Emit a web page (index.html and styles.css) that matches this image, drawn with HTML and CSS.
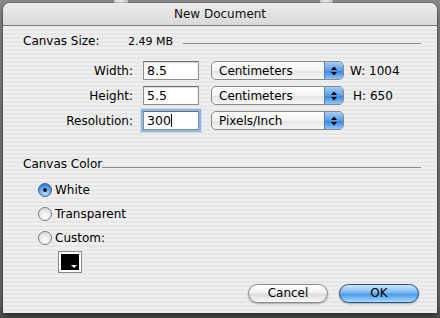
FILE: index.html
```html
<!DOCTYPE html>
<html>
<head>
<meta charset="utf-8">
<link rel="stylesheet" href="styles.css">
</head>
<body>
<div class="window">
  <div class="titlebar">New Document</div>
  <div class="content">
    <div class="sizerow">
      <span class="sizelbl">Canvas Size:</span>
      <span class="mb">2.49 MB</span>
      <span class="rule"></span>
    </div>
    <div class="form">
      <span class="flabel">Width:</span>
      <div class="field">8.5</div>
      <div class="popup"><span class="ptext">Centimeters</span><span class="cap"><svg width="8" height="12" viewBox="0 0 8 12"><path d="M1 5 L4 1.5 L7 5 Z M1 7 L4 10.5 L7 7 Z" fill="#000"/></svg></span></div>
      <span class="dim">W: 1004</span>

      <span class="flabel">Height:</span>
      <div class="field">5.5</div>
      <div class="popup"><span class="ptext">Centimeters</span><span class="cap"><svg width="8" height="12" viewBox="0 0 8 12"><path d="M1 5 L4 1.5 L7 5 Z M1 7 L4 10.5 L7 7 Z" fill="#000"/></svg></span></div>
      <span class="dim dim-h">H: 650</span>

      <span class="flabel">Resolution:</span>
      <div class="field focus">300<span class="caret"></span></div>
      <div class="popup"><span class="ptext">Pixels/Inch</span><span class="cap"><svg width="8" height="12" viewBox="0 0 8 12"><path d="M1 5 L4 1.5 L7 5 Z M1 7 L4 10.5 L7 7 Z" fill="#000"/></svg></span></div>
      <span class="dim"></span>
    </div>
    <div class="section"><span>Canvas Color</span><span class="rule2"></span></div>
    <div class="radios">
      <div class="radio-row"><span class="radio on"><span class="dot"></span></span><span>White</span></div>
      <div class="radio-row"><span class="radio"></span><span>Transparent</span></div>
      <div class="radio-row"><span class="radio"></span><span>Custom:</span></div>
    </div>
    <div class="swatch"><span class="swatch-arrow"></span></div>
    <div class="buttons">
      <div class="btn">Cancel</div>
      <div class="btn default">OK</div>
    </div>
  </div>
</div>
</body>
</html>
```
FILE: styles.css
```css
html, body {
  margin: 0;
  padding: 0;
}
body {
  width: 440px;
  height: 318px;
  overflow: hidden;
  background:
    linear-gradient(90deg, transparent 114px, #d8d8d8 114px, #f0f0f0 121px, #c8c8c8 128px, transparent 128px) 0 0 / 440px 3px no-repeat,
    linear-gradient(90deg, transparent 320px, #d0d0d0 320px, #eeeeee 326px, #c0c0c0 333px, transparent 333px) 0 0 / 440px 3px no-repeat,
    linear-gradient(#8a8a8a, #6a6a6a 300px, #505050);
  font-family: "Lucida Grande", "DejaVu Sans", sans-serif;
  font-size: 12px;
  color: #000;
  padding-top: 3px;
  box-sizing: border-box;
}
.window {
  margin: 0 3px;
  height: 310px;
  border-radius: 7px 7px 0 0;
  background: repeating-linear-gradient(180deg, #efefef 0 2px, #e7e7e7 2px 4px);
  box-shadow: 0 3px 6px rgba(0,0,0,0.55), 0 0 0 1px rgba(0,0,0,0.12);
  overflow: hidden;
  display: flex;
  flex-direction: column;
}
.titlebar {
  height: 22px;
  line-height: 22px;
  text-align: center;
  background: linear-gradient(#ececec, #d9d9d9);
  border-bottom: 1px solid #7b7b7b;
  color: #111;
}
.content {
  padding: 7px 16px 0 20px;
  display: flex;
  flex-direction: column;
}
.sizerow {
  display: flex;
  align-items: center;
  height: 16px;
}
.sizelbl {
  width: 105px;
  flex: none;
}
.mb {
  font-size: 11px;
  flex: none;
}
.rule {
  flex: 1;
  border-top: 1px solid #8c8c8c;
  margin-left: 10px;
  margin-top: 4px;
}
.form {
  margin-top: 12px;
  display: grid;
  grid-template-columns: 110px 56px 135px auto;
  grid-auto-rows: 19px;
  column-gap: 10px;
  row-gap: 6px;
  align-items: center;
}
.flabel {
  text-align: right;
}
.field {
  height: 19px;
  box-sizing: border-box;
  border: 1px solid #8e8e8e;
  border-top-color: #6e6e6e;
  background: #fff;
  box-shadow: inset 0 1px 1px rgba(0,0,0,0.15);
  padding-left: 3px;
  line-height: 17px;
  font-size: 12.5px;
  position: relative;
}
.field.focus {
  box-shadow: 0 0 0 2px #8fb6e6, 0 0 0 3px #c8dbf3;
}
.caret {
  display: inline-block;
  width: 1px;
  height: 13px;
  background: #000;
  vertical-align: -2px;
}
.popup {
  margin-left: 2px;
  height: 19px;
  box-sizing: border-box;
  border: 1px solid #8a8a8a;
  border-radius: 5px;
  background: linear-gradient(#ffffff, #f4f4f4 50%, #e6e6e6 55%, #f7f7f7);
  display: flex;
  align-items: center;
  overflow: hidden;
}
.ptext {
  flex: 1;
  padding-left: 7px;
}
.cap {
  width: 18px;
  height: 100%;
  background: linear-gradient(#a8cdf2, #5b9ce8 50%, #3b86e0 55%, #8ec6fb);
  border-left: 1px solid #5a7fb6;
  display: flex;
  align-items: center;
  justify-content: center;
}
.dim {
  margin-left: -4px;
}
.dim-h {
  margin-left: -1px;
}
.section {
  margin-top: 26px;
  display: flex;
  align-items: center;
  height: 16px;
}
.rule2 {
  flex: 1;
  border-top: 1px solid #8c8c8c;
  margin-top: 7px;
}
.radios {
  margin-top: 6px;
  margin-left: 15px;
  display: flex;
  flex-direction: column;
}
.radio-row {
  height: 24px;
  display: flex;
  align-items: center;
  gap: 3px;
}
.radio {
  width: 14px;
  height: 14px;
  box-sizing: border-box;
  border-radius: 50%;
  border: 1px solid #7c7c7c;
  background: radial-gradient(circle at 50% 75%, #ffffff, #e6e6e6 60%, #cfcfcf);
  display: flex;
  align-items: center;
  justify-content: center;
}
.radio.on {
  border-color: #3a5f95;
  background: radial-gradient(circle at 50% 80%, #b9e0ff, #5ca3ec 55%, #3179d6 80%);
}
.dot {
  width: 4px;
  height: 4px;
  border-radius: 50%;
  background: #111;
}
.swatch {
  margin-top: 1px;
  margin-left: 35px;
  width: 24px;
  height: 22px;
  box-sizing: border-box;
  border: 1px solid #888;
  background: #fff;
  padding: 2px;
  position: relative;
}
.swatch::before {
  content: "";
  display: block;
  width: 100%;
  height: 100%;
  background: #000;
}
.swatch-arrow {
  position: absolute;
  right: 4px;
  bottom: 4px;
  width: 0;
  height: 0;
  border-left: 3px solid transparent;
  border-right: 3px solid transparent;
  border-top: 3px solid #fff;
}
.buttons {
  margin-top: 11px;
  margin-right: 2px;
  display: flex;
  justify-content: flex-end;
  gap: 11px;
}
.btn {
  width: 80px;
  height: 19px;
  box-sizing: border-box;
  border-radius: 10px;
  border: 1px solid #8a8a8a;
  background: linear-gradient(#ffffff, #f2f2f2 45%, #dcdcdc 55%, #f8f8f8);
  text-align: center;
  line-height: 17px;
  box-shadow: 0 1px 2px rgba(0,0,0,0.3);
}
.btn.default {
  border-color: #2d4f8a;
  background: linear-gradient(#cfe6fb, #7ab8f2 45%, #4c9ae8 55%, #a6dcff);
}
```
